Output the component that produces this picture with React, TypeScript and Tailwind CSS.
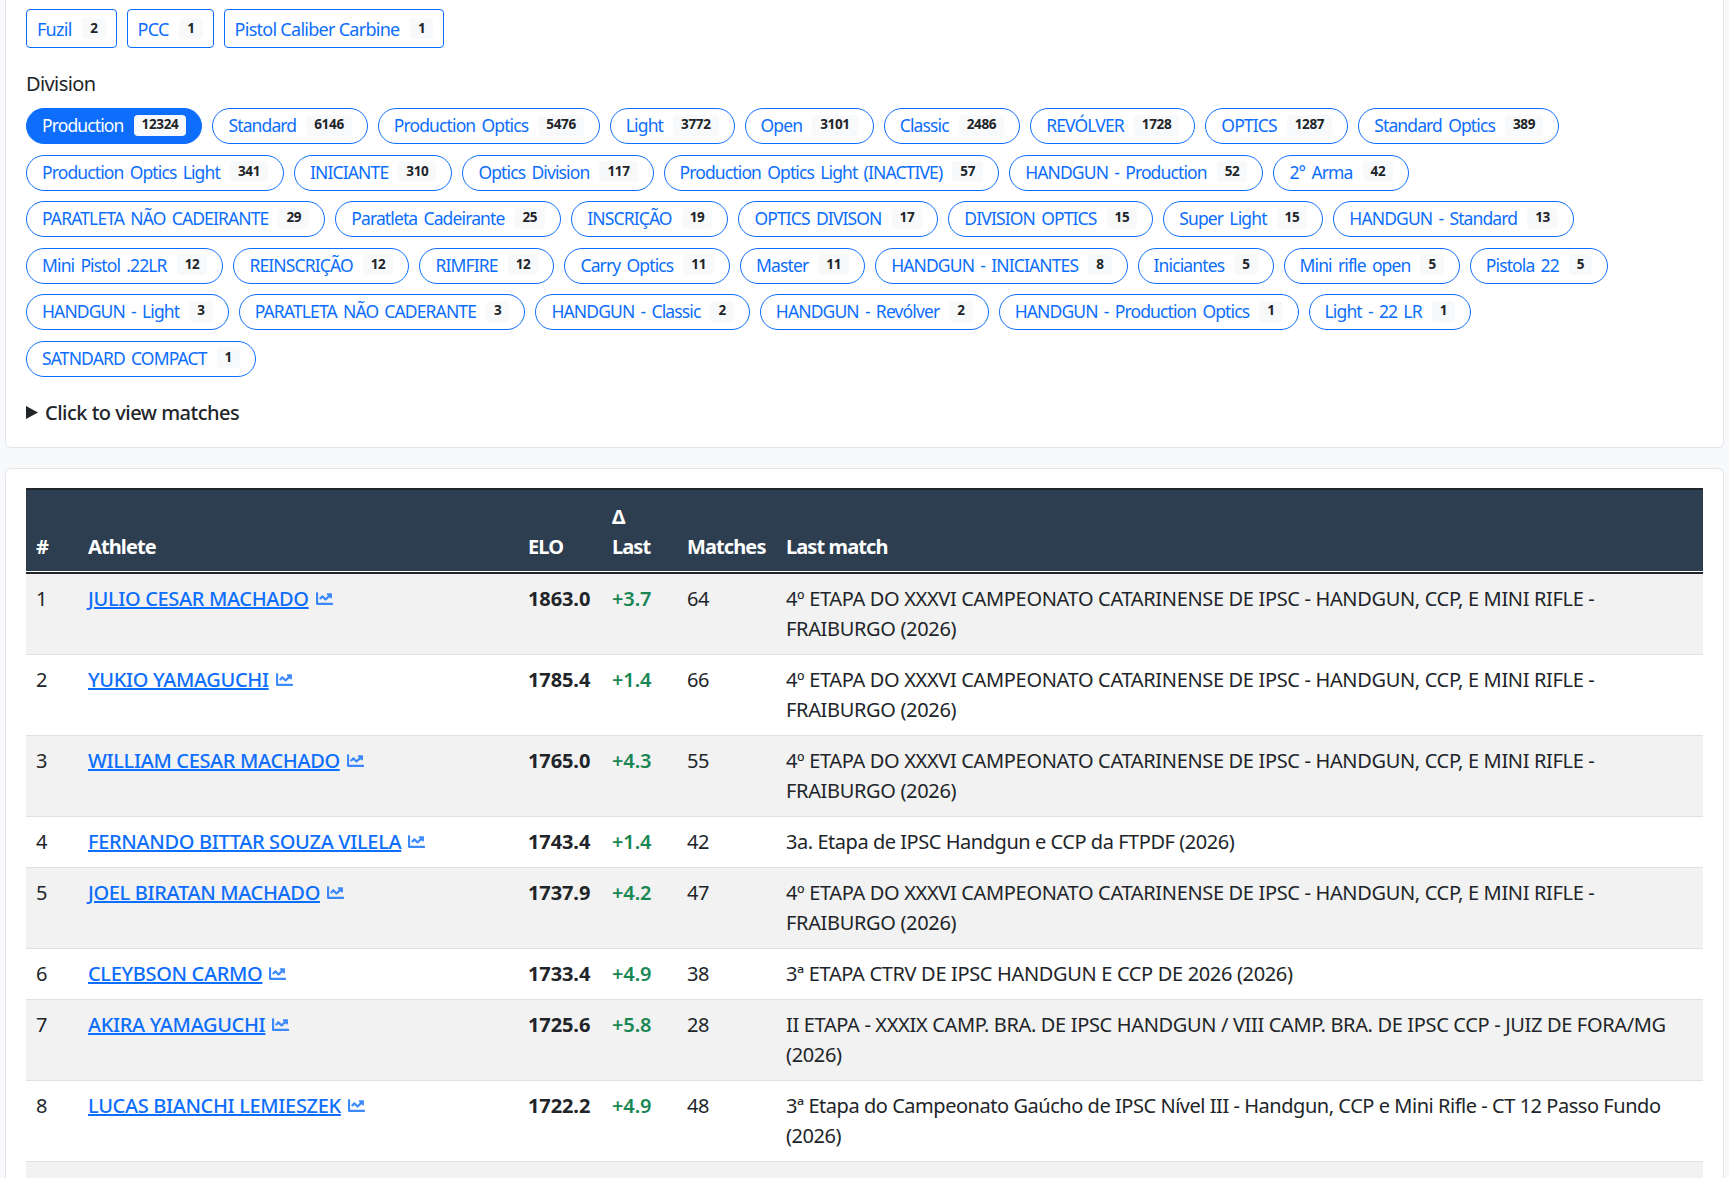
import React from "react";
import { FaChartLine } from "react-icons/fa";

const cats: [string, number][] = [["Fuzil", 2], ["PCC", 1], ["Pistol Caliber Carbine", 1]];
const divisions: [string, number][] = [
  ["Production", 12324], ["Standard", 6146], ["Production Optics", 5476], ["Light", 3772], ["Open", 3101], ["Classic", 2486], ["REVÓLVER", 1728], ["OPTICS", 1287], ["Standard Optics", 389],
  ["Production Optics Light", 341], ["INICIANTE", 310], ["Optics Division", 117], ["Production Optics Light (INACTIVE)", 57], ["HANDGUN - Production", 52], ["2° Arma", 42],
  ["PARATLETA NÃO CADEIRANTE", 29], ["Paratleta Cadeirante", 25], ["INSCRIÇÃO", 19], ["OPTICS DIVISON", 17], ["DIVISION OPTICS", 15], ["Super Light", 15], ["HANDGUN - Standard", 13],
  ["Mini Pistol .22LR", 12], ["REINSCRIÇÃO", 12], ["RIMFIRE", 12], ["Carry Optics", 11], ["Master", 11], ["HANDGUN - INICIANTES", 8], ["Iniciantes", 5], ["Mini rifle open", 5], ["Pistola 22", 5],
  ["HANDGUN - Light", 3], ["PARATLETA NÃO CADERANTE", 3], ["HANDGUN - Classic", 2], ["HANDGUN - Revólver", 2], ["HANDGUN - Production Optics", 1], ["Light - 22 LR", 1],
  ["SATNDARD COMPACT", 1],
];
const E4 = "4º ETAPA DO XXXVI CAMPEONATO CATARINENSE DE IPSC - HANDGUN, CCP, E MINI RIFLE - FRAIBURGO (2026)";
const rows: [number, string, string, string, number, string, boolean][] = [
  [1, "JULIO CESAR MACHADO", "1863.0", "+3.7", 64, E4, true],
  [2, "YUKIO YAMAGUCHI", "1785.4", "+1.4", 66, E4, true],
  [3, "WILLIAM CESAR MACHADO", "1765.0", "+4.3", 55, E4, true],
  [4, "FERNANDO BITTAR SOUZA VILELA", "1743.4", "+1.4", 42, "3a. Etapa de IPSC Handgun e CCP da FTPDF (2026)", false],
  [5, "JOEL BIRATAN MACHADO", "1737.9", "+4.2", 47, E4, true],
  [6, "CLEYBSON CARMO", "1733.4", "+4.9", 38, "3ª ETAPA CTRV DE IPSC HANDGUN E CCP DE 2026 (2026)", true],
  [7, "AKIRA YAMAGUCHI", "1725.6", "+5.8", 28, "II ETAPA - XXXIX CAMP. BRA. DE IPSC HANDGUN / VIII CAMP. BRA. DE IPSC CCP - JUIZ DE FORA/MG (2026)", true],
  [8, "LUCAS BIANCHI LEMIESZEK", "1722.2", "+4.9", 48, "3ª Etapa do Campeonato Gaúcho de IPSC Nível III - Handgun, CCP e Mini Rifle - CT 12 Passo Fundo (2026)", false],
];

function Badge({ n }: { n: number }) {
  return (
    <span className="inline-flex h-[21px] items-center rounded-[4px] bg-[#f8f9fa] px-[8px] text-[13.5px] font-bold leading-none tracking-[-0.025em] text-[#212529] [word-spacing:0]">
      {n}
    </span>
  );
}

const th = "px-[10px] pb-[9px] pt-[12px] align-bottom font-bold";
const td = "px-[10px] py-[10px] align-top tracking-[-0.017em]";

export default function App() {
  return (
    <div className="h-[1178px] overflow-hidden bg-[#f8f9fa] px-[5px] font-['Noto_Sans',sans-serif] text-[20px] leading-[30px] tracking-[-0.045em] text-[#212529]">
      <div className="rounded-b-[6px] border border-t-0 border-[#e3e5e8] bg-white px-[20px] pb-[19px] pt-[9px]">
        <div className="flex gap-[10px]">
          {cats.map(([t, n]) => (
            <span key={t} className="flex h-[39px] items-center gap-[10.5px] rounded-[4px] border border-[#0d6efd] px-[10px] text-[18px] tracking-[-0.04em] text-[#0d6efd]">
              {t}
              <Badge n={n} />
            </span>
          ))}
        </div>
        <div className="mt-[21px] tracking-[-0.03em]">Division</div>
        <div className="mt-[9px] flex flex-wrap gap-x-[10px] gap-y-[10.5px]">
          {divisions.map(([t, n], i) => (
            <span
              key={t}
              className={
                i === 0
                  ? "flex h-[36px] items-center gap-[10px] rounded-full border border-[#0d6efd] bg-[#0d6efd] px-[15px] pb-[2px] text-[17.5px] tracking-[-0.05em] text-white [word-spacing:2.5px]"
                  : "flex h-[36px] items-center gap-[10px] rounded-full border border-[#0d6efd] px-[15px] pb-[2px] text-[17.5px] tracking-[-0.05em] text-[#0d6efd] [word-spacing:2.5px]"
              }
            >
              {t}
              <Badge n={n} />
            </span>
          ))}
        </div>
        <details className="mt-[21px]">
          <summary className="flex list-none items-center gap-[7px] font-medium tracking-[-0.025em] [&::-webkit-details-marker]:hidden">
            <svg width="12" height="15" viewBox="0 0 12 15" className="shrink-0">
              <path d="M0 1 L12 7.5 L0 14 Z" fill="#212529" />
            </svg>
            Click to view matches
          </summary>
        </details>
      </div>

      <div className="mt-[20px] rounded-t-[6px] border border-b-0 border-[#e3e5e8] bg-white px-[20px] pt-[19px]">
        <table className="w-full table-fixed border-collapse">
          <colgroup>
            <col className="w-[52px]" />
            <col className="w-[440px]" />
            <col className="w-[84px]" />
            <col className="w-[75px]" />
            <col className="w-[99px]" />
            <col />
          </colgroup>
          <thead>
            <tr className="border-t-2 border-[#212529] bg-[#2c3e50] text-left text-white">
              <th className={th}>#</th>
              <th className={th}>Athlete</th>
              <th className={th}>ELO</th>
              <th className={th}>Δ<br />Last</th>
              <th className={th + " whitespace-nowrap"}>Matches</th>
              <th className={th}>Last match</th>
            </tr>
            <tr className="h-[3px] border-t border-white bg-[#212529]">
              <th colSpan={6} className="h-[2px] p-0"></th>
            </tr>
          </thead>
          <tbody>
            {rows.map(([i, name, elo, d, m, last, caps]) => (
              <tr key={i} className="border-b border-[#dee2e6] odd:bg-[#f2f2f2]">
                <td className={td}>{i}</td>
                <td className={td}>
                  <a className="font-medium text-[#0d6efd] underline">{name}</a>
                  <FaChartLine className="ml-[7px] inline-block size-[17px] align-[-1px] text-[#0d6efd] opacity-80" />
                </td>
                <td className="px-[10px] py-[10px] align-top font-bold tracking-[-0.005em]">{elo}</td>
                <td className="px-[10px] py-[10px] align-top font-semibold tracking-[-0.005em] text-[#198754]">{d}</td>
                <td className={td}>{m}</td>
                <td className={caps ? "px-[10px] py-[10px] align-top tracking-[-0.017em]" : "px-[10px] py-[10px] align-top tracking-[-0.023em]"}>{last}</td>
              </tr>
            ))}
            <tr className="h-[100px] bg-[#f2f2f2]">
              <td colSpan={6}></td>
            </tr>
          </tbody>
        </table>
      </div>
    </div>
  );
}
